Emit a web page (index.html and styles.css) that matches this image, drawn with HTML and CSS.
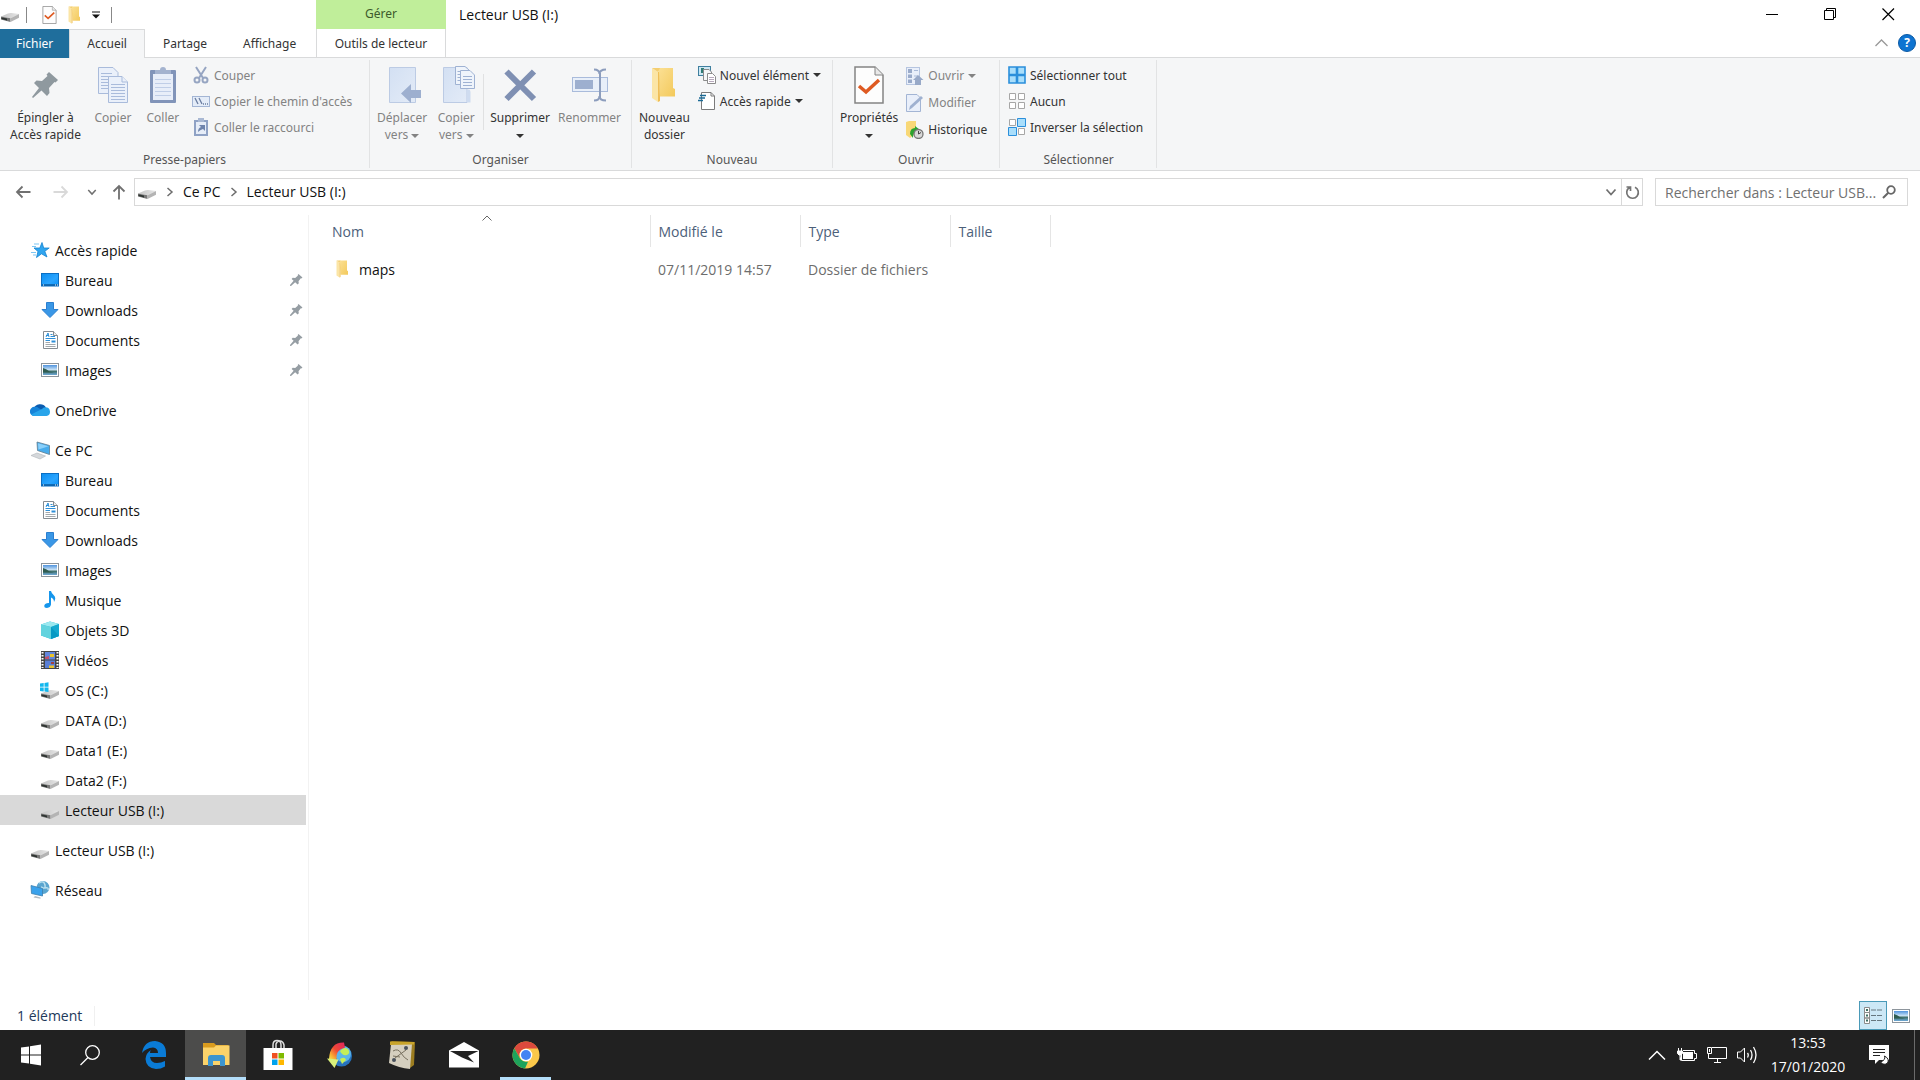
FILE: index.html
```html
<!DOCTYPE html>
<html lang="fr">
<head>
  <meta charset="UTF-8">
  <title>Lecteur USB (I:)</title>
  <link rel="stylesheet" href="styles.css">
</head>
<body>

<!-- shared icons -->
<svg class="defs" aria-hidden="true">
  <defs>
    <linearGradient id="gBlue" x1="0" y1="0" x2="1" y2="1"><stop offset="0" stop-color="#0a8df0"/><stop offset=".6" stop-color="#2ba5ff"/><stop offset="1" stop-color="#0a90f5"/></linearGradient>
    <linearGradient id="gSky" x1="0" y1="0" x2="0" y2="1"><stop offset="0" stop-color="#4f93dd"/><stop offset=".5" stop-color="#cfe6f7"/><stop offset=".6" stop-color="#3c6b62"/><stop offset="1" stop-color="#6fa9d8"/></linearGradient>
    <linearGradient id="gFolder" x1="0" y1="0" x2="1" y2="1"><stop offset="0" stop-color="#fbe094"/><stop offset="1" stop-color="#f3c95b"/></linearGradient>
    <linearGradient id="gPale" x1="0" y1="0" x2="1" y2="1"><stop offset="0" stop-color="#d3e0f3"/><stop offset="1" stop-color="#e3ebf7"/></linearGradient>
    <linearGradient id="gDrive" x1="0" y1="0" x2="1" y2="0"><stop offset="0" stop-color="#c4c4c4"/><stop offset="1" stop-color="#e6e6e6"/></linearGradient>
    <linearGradient id="gArc" x1="1" y1="0" x2="0" y2="1"><stop offset="0" stop-color="#e0245e"/><stop offset=".5" stop-color="#ee4a35"/><stop offset=".8" stop-color="#f9b233"/><stop offset="1" stop-color="#e8ee5a"/></linearGradient>
  </defs>
  <symbol id="drive" viewBox="0 0 20 20">
    <path d="M1 13.500L8 10.500Q9.500 9.800 11.500 10L19 11L10.500 15.300Z" fill="url(#gDrive)"/>
    <path d="M1 13.500L10.500 15.300V19L1 16.500Z" fill="#777"/>
    <path d="M1.500 14.400L7 15.600V17.600L1.500 16Z" fill="#2e3431"/>
    <path d="M10.500 15.300L19 11V14.800L10.500 19Z" fill="#b4b4b4"/>
  </symbol>
  <symbol id="osdrive" viewBox="0 0 20 20">
    <use href="#drive"/>
    <path d="M0 3.500L3.700 3V6.800H0ZM4.500 2.900L8.500 2.300V6.800H4.500ZM0 7.600H3.700V11.400L0 10.900ZM4.500 7.600H8.500V12L4.500 11.500Z" fill="#12b7ee"/>
  </symbol>
  <symbol id="star" viewBox="0 0 20 20">
    <path d="M12 2.500L13.700 8H19.200L14.800 11.300L17 17L11.500 13.800L6.500 17.500L8 11.500L4 8H9.800Z" fill="#2fa5ef" stroke="#1583d0" stroke-width=".8"/>
    <path d="M4 4H9M2 6.500H6M1 12.500H6M3 15H6" stroke="#7cc6f3"/>
  </symbol>
  <symbol id="desktop" viewBox="0 0 20 20">
    <rect x="1.500" y="3.500" width="17" height="12.500" fill="url(#gBlue)" stroke="#0b6fc4"/>
    <path d="M2 15H18" stroke="#0b5b9f" stroke-width="1.500"/>
    <path d="M3 15H4M15 15H16M17 15H18" stroke="#fff"/>
  </symbol>
  <symbol id="down" viewBox="0 0 20 20">
    <path d="M6.500 2.500H13.500V9.500H18L10 17.500L2 9.500H6.500Z" fill="#3a97e6" stroke="#2b7fd0"/>
  </symbol>
  <symbol id="doc" viewBox="0 0 20 20">
    <path d="M3.500 1.500H13.500L17.500 5.500V18.500H3.500Z" fill="#fff" stroke="#858c92"/>
    <path d="M13.500 1.500V5.500H17.500" fill="#eee" stroke="#858c92"/>
    <path d="M6 7L8 3L9 7M6 5.500H9M10.500 4.500H12.500M10.500 6.500H15M5.500 8.500H15.500M5.500 10.500H10" stroke="#2c8fd8" fill="none"/>
    <path d="M11.500 10.500H15.500V12.500H11.500Z" fill="#2c8fd8"/>
    <path d="M5.500 12.500H10M5.500 14.500H15.500M5.500 16.500H15.500" stroke="#a3a9ad"/>
  </symbol>
  <symbol id="image" viewBox="0 0 20 20">
    <rect x="1.500" y="3.500" width="17" height="13" fill="#fff" stroke="#8d959c"/>
    <rect x="3" y="5" width="14" height="10" fill="url(#gSky)"/>
    <path d="M3 8Q7 9 9.500 11.500L14 12.500H3Z" fill="#2f5c50"/>
  </symbol>
  <symbol id="cloud" viewBox="0 0 20 20">
    <path d="M3.500 9A7 7 0 0 1 16 7.500L10 13Z" fill="#0a5cb0"/>
    <path d="M4.500 16A4.600 4.600 0 0 1 4.500 6.800Q7 6.500 9 8.200L14 11L8 16Z" fill="#1683d8"/>
    <path d="M4.500 16Q2.500 16 1 14.500L12 9Q13.500 7 15.500 7.300A4.400 4.400 0 0 1 16.500 16Z" fill="#28a4ea"/>
  </symbol>
  <symbol id="pc" viewBox="0 0 20 20">
    <path d="M7 2L19.500 5.500V14.500L7.500 10.500Z" fill="#48acec" stroke="#5e7c90" stroke-width=".8"/>
    <path d="M8 3.300L18.500 6.200L8.500 9.500Z" fill="#8bd0fa"/>
    <path d="M1 15.500L7 13L15.500 16L10 19Z" fill="#d5d8db" stroke="#b0b5ba" stroke-width=".6"/>
  </symbol>
  <symbol id="music" viewBox="0 0 20 20">
    <path d="M9 1H11Q11.500 3.500 14 5.500Q16.500 8 14 12Q14 8.500 11 7.500V14.500Q10.500 17.500 7 18Q4 18 4.300 15.500Q5 12.800 9 13Z" fill="#1696ec"/>
  </symbol>
  <symbol id="cube" viewBox="0 0 20 20">
    <path d="M1 4.500L10 1.500L19 4V16L11 19L1 15.500Z" fill="#27bdd8"/>
    <path d="M1 4.500L10 1.500L19 4L11 7Z" fill="#9be8ef"/>
    <path d="M1 4.500L11 7V19L1 15.500Z" fill="#62d3de"/>
    <path d="M11 7L19 4V16L11 19Z" fill="#14a9cf"/>
    <path d="M11 7L19 16L11 19Z" fill="#089ac4"/>
  </symbol>
  <symbol id="video" viewBox="0 0 20 20">
    <rect x="1" y="1" width="18" height="18" fill="#444"/>
    <path d="M2.500 2V18M17.500 2V18" stroke="#fff" stroke-width="2" stroke-dasharray="1.500 1.500"/>
    <rect x="5" y="2" width="10" height="7.500" fill="#6286dc"/>
    <rect x="5" y="10.500" width="10" height="7.500" fill="#5a7fd6"/>
    <path d="M10 4H14V7H10Z" fill="#e8c22c"/><path d="M5 7L9 6V9H5Z" fill="#c0506d"/>
    <path d="M11 12H14V14H11Z" fill="#a04040"/><path d="M9 15.500H14V18H9Z" fill="#e8c22c"/>
  </symbol>
  <symbol id="network" viewBox="0 0 20 20">
    <circle cx="13" cy="7.500" r="6.500" fill="#5aa5cf"/>
    <path d="M9 3Q14 0 15 5T11 7M15 8Q19 7 18 10" stroke="#b9dfee" fill="none" stroke-width="1.500"/>
    <path d="M1 5.500L12.500 8.500V16L1.500 13.500Z" fill="#3aa2ec" stroke="#3b7fae" stroke-width=".8"/>
    <path d="M5 16L10.500 17.500V18.800L3.500 17.500Z" fill="#b4bcc2"/>
  </symbol>
  <symbol id="pin" viewBox="0 0 14 14">
    <path d="M9.500 1L13.500 4.500L12.300 5.500L11.800 5.200L9.500 8.200L9.800 10.300L8.600 11.500L6.200 9.200L2 13L1 12.800L1 12L4.600 7.800L2.600 6L3.700 4.800L6.200 5L9 2.600L8.700 1.900Z" fill="#959da3"/>
  </symbol>
  <symbol id="folder" viewBox="0 0 24 36">
    <path d="M6 1H21V21L23 22V29.500H8Z" fill="url(#gFolder)"/>
    <path d="M0 1L6 5V35L0 31Z" fill="#fbe5a6"/><path d="M6 5V35L8 34V30L7 5Z" fill="#f0bf57"/>
    <path d="M0 1H8L6 5Z" fill="#f4ce70"/>
  </symbol>
  <symbol id="chev" viewBox="0 0 12 12"><path d="M1.500 3.500L6 8.500L10.500 3.500" fill="none" stroke="currentColor" stroke-width="1.800"/></symbol>
  <symbol id="crumb" viewBox="0 0 12 12"><path d="M3.500 2L8 6L3.500 10" fill="none" stroke="currentColor" stroke-width="1.500"/></symbol>
  <symbol id="check" viewBox="0 0 30 38">
    <path d="M1 1H21L29 9V37H1Z" fill="#fdfdfd" stroke="#848484" stroke-width="1.500"/>
    <path d="M21 1V9H29" fill="#e9e9e9" stroke="#848484"/>
    <path d="M5 20L12 26L25 14" fill="none" stroke="#de5a22" stroke-width="3.500"/>
  </symbol>
</svg>

<header class="window-head">
  <div class="quick-access">
    <svg class="ico20 drive-ico"><use href="#drive"/></svg>
    <span class="bar"></span>
    <button aria-label="Propriétés"><svg width="15" height="18"><use href="#check"/></svg></button>
    <button aria-label="Nouveau dossier"><svg width="13" height="18"><use href="#folder"/></svg></button>
    <button aria-label="Personnaliser"><svg width="8" height="8" viewBox="0 0 8 8"><path d="M0 1H8" stroke="#111" stroke-width="1"/><path d="M0 3.500H8L4 7.500Z" fill="#111"/></svg></button>
    <span class="bar"></span>
  </div>
  <div class="context-tag">Gérer</div>
  <div class="window-title">Lecteur USB (I:)</div>
  <div class="window-controls">
    <button aria-label="Réduire"><svg width="13" height="13"><path d="M0 6.500H12" stroke="#000"/></svg></button>
    <button aria-label="Restaurer"><svg width="13" height="13"><path d="M.5 2.500H9.500V11.500H.5ZM2.500 2.500V.5H11.500V9.500H9.500" fill="none" stroke="#000"/></svg></button>
    <button aria-label="Fermer"><svg width="13" height="13"><path d="M.5 .5L12 12M12 .5L.5 12" stroke="#000" stroke-width="1.200"/></svg></button>
  </div>

  <nav class="tabs">
    <button class="tab tab-file">Fichier</button>
    <button class="tab tab-active">Accueil</button>
    <button class="tab">Partage</button>
    <button class="tab">Affichage</button>
  </nav>
  <button class="tab tab-context">Outils de lecteur</button>
  <div class="tab-fill"></div>
  <div class="ribbon-help">
    <button aria-label="Réduire le ruban"><svg width="13" height="8"><path d="M.5 7L6.500 1L12.500 7" fill="none" stroke="#999" stroke-width="1.300"/></svg></button>
    <button class="help" aria-label="Aide">?</button>
  </div>
</header>

<section class="ribbon">
  <div class="group group-clipboard">
    <div class="group-body">
      <button class="big pin-big">
        <svg width="38" height="38" viewBox="0 0 38 38"><path d="M23 6L32 14L29.500 16.500L28.500 16L23 22L23.500 27L21 30L15.500 24.500L7 32L6 31L13 22L8 17L10.500 14.500L16 15L21.500 10L20.500 8.500Z" fill="#8f999f"/></svg>
        <span>Épingler à<br>Accès rapide</span>
      </button>
      <button class="big" disabled>
        <svg width="38" height="38" viewBox="0 0 38 38" fill="#eaf0fa" stroke="#a9bbdb"><path d="M4.500 1.500H19L24 6.500V27.500H4.500Z"/><path d="M7 7.500H18M7 10.500H20M7 13.500H20M7 16.500H20M7 19.500H20M7 22.500H20"/><path d="M14.500 10.500H28L33.500 16V36.500H14.500Z"/><path d="M28 10.500V16H33.500M17 18.500H31M17 21.500H31M17 24.500H31M17 27.500H31M17 30.500H31M17 33.500H31"/></svg>
        <span>Copier</span>
      </button>
      <button class="big" disabled>
        <svg width="38" height="38" viewBox="0 0 38 38"><rect x="6" y="4" width="26" height="33" rx="1" fill="#8194b9"/><rect x="9" y="8" width="20" height="26" fill="#e8eef9"/><path d="M11 13.500H27M11 17.500H27M11 21.500H27M11 25.500H27M11 29.500H27" stroke="#c0cee7"/><path d="M11 4H16A3 3 0 0 1 22 4H27V8H11Z" fill="#a4b3cf"/></svg>
        <span>Coller</span>
      </button>
      <div class="small-list">
        <button disabled><svg class="ico18" viewBox="0 0 18 18" fill="none" stroke="#96a5c2" stroke-width="2"><path d="M4 1L11 12M14 1L7 12"/><circle cx="5" cy="14" r="2.500"/><circle cx="13" cy="14" r="2.500"/></svg>Couper</button>
        <button disabled><svg class="ico18" viewBox="0 0 18 18"><rect x=".5" y="4.500" width="17" height="10" fill="#e4ecf8" stroke="#a3b5d4"/><path d="M3 6L6 12M7 6L10 12M11 12H12M13 12H14M15 12H16" stroke="#6a7da0" stroke-width="1.300"/></svg>Copier le chemin d'accès</button>
        <button disabled><svg class="ico18" viewBox="0 0 18 18"><rect x="2" y="2" width="14" height="16" fill="#8fa2c5"/><rect x="4" y="4" width="10" height="12" fill="#e6edf8"/><path d="M6 0H12V4H6Z" fill="#a9b8d3"/><path d="M6 14Q6 10 9 9L7 7H13V13L11 11Q8 12 6 14Z" fill="#6f84ac"/></svg>Coller le raccourci</button>
      </div>
    </div>
    <div class="group-name">Presse-papiers</div>
  </div>

  <div class="group group-organise">
    <div class="group-body">
      <button class="big" disabled>
        <svg width="38" height="38" viewBox="0 0 38 38"><path d="M6.500 1.500H32.500V36.500H6.500Z" fill="url(#gPale)" stroke="#bccbe4"/><path d="M18 27.500L28 18V24H38V32H28V37Z" fill="#9dafcf"/></svg>
        <span>Déplacer<br>vers <i class="caret"></i></span>
      </button>
      <button class="big" disabled>
        <svg width="38" height="38" viewBox="0 0 38 38"><path d="M6.500 1.500H30V36.500H6.500Z" fill="url(#gPale)" stroke="#bccbe4"/><path d="M30 24Q34 22 33.500 28V36.500H30Z" fill="#cfdcf0"/><g fill="#eff4fb" stroke="#9fb2d3"><path d="M18.500 .5H28L32 4V18.500H18.500Z"/><path d="M23.500 4.500H33L37.500 9V22.500H23.500Z"/><path d="M26 10.500H35M26 13.500H35M26 16.500H35M26 19.500H35M20.500 5.500H23M20.500 8.500H23M20.500 11.500H23M20.500 14.500H23"/></g></svg>
        <span>Copier<br>vers <i class="caret"></i></span>
      </button>
      <span class="divider"></span>
      <button class="big">
        <svg width="38" height="38" viewBox="0 0 38 38"><path d="M5.500 5.500L33 33M33 5.500L5.500 33" stroke="#7f90b3" stroke-width="6"/></svg>
        <span>Supprimer<br><i class="caret"></i></span>
      </button>
      <button class="big" disabled>
        <svg width="38" height="38" viewBox="0 0 38 38"><rect x="1.500" y="11.500" width="35" height="14" fill="#e8eff9" stroke="#a9bbdb"/><rect x="4" y="14" width="18" height="9" fill="#9dafcf"/><path d="M23 3.500Q28.500 3.500 28.500 8Q28.500 3.500 35 3.500M29 7V32M23 34.500Q28.500 34.500 28.500 30Q28.500 34.500 35 34.500" fill="none" stroke="#8c9dbd" stroke-width="2"/></svg>
        <span>Renommer</span>
      </button>
    </div>
    <div class="group-name">Organiser</div>
  </div>

  <div class="group group-new">
    <div class="group-body">
      <button class="big">
        <svg width="24" height="38"><use href="#folder"/></svg>
        <span>Nouveau<br>dossier</span>
      </button>
      <div class="small-list">
        <button><svg class="ico18" viewBox="0 0 18 18"><rect x=".5" y=".5" width="12" height="9" fill="#cfe8f4" stroke="#3f7f9f"/><rect x="3" y="2" width="3" height="5" fill="#317c75"/><path d="M5.500 3.500H11L13.500 6V14.500H5.500Z" fill="#f7f7f9" stroke="#8c8c8c"/><path d="M9.500 7.500H14.500L17.500 10.500V17.500H9.500Z" fill="#fff" stroke="#8c8c8c"/><path d="M11 11.500H16M11 13.500H16M11 15.500H16" stroke="#b7a9bd"/></svg>Nouvel élément <i class="caret"></i></button>
        <button><svg class="ico18" viewBox="0 0 18 18"><path d="M3.500 .5H13L16.500 4V17.500H3.500Z" fill="#fff" stroke="#7b7b7b"/><path d="M13 .5V4H16.500" fill="none" stroke="#7b7b7b"/><path d="M2 3.500H8M1 6H7M0 8.500H5" stroke="#1b6b96" stroke-width="1.300"/></svg>Accès rapide <i class="caret"></i></button>
      </div>
    </div>
    <div class="group-name">Nouveau</div>
  </div>

  <div class="group group-open">
    <div class="group-body">
      <button class="big">
        <svg width="30" height="38"><use href="#check"/></svg>
        <span>Propriétés<br><i class="caret"></i></span>
      </button>
      <div class="small-list roomy">
        <button disabled><svg class="ico18" viewBox="0 0 18 18"><rect x=".5" y=".5" width="13" height="17" fill="#e9effa" stroke="#b6c5e0"/><path d="M2 2H6V6H2ZM2 7.500H6V11H2ZM2 12.500H6V16H2Z" fill="#9aabca"/><path d="M8 3.500H12M8 9H12" stroke="#a9bad8"/><path d="M12 8L17.500 13H15V18H9V13H7Z" fill="#98a9c8"/></svg>Ouvrir <i class="caret"></i></button>
        <button disabled><svg class="ico18" viewBox="0 0 18 18"><path d="M.5 .5H11L14.500 4V17.500H.5Z" fill="#e9effa" stroke="#a3b5d4"/><path d="M15 2L17 4L6 14L3 16L4 12Z" fill="#9fb1d0"/></svg>Modifier</button>
        <button><svg class="ico18" viewBox="0 0 18 18"><path d="M0 1L3 0H10V12L4 17L0 14Z" fill="#f8d877"/><path d="M4 13Q4 7 9 7V5L14 9L9 12Q7 12 7 17Z" fill="#2ba32f"/><circle cx="12.500" cy="13" r="4.500" fill="#d8d8d8" stroke="#777" stroke-width="1.300"/><path d="M12.500 10V13L15 11.500" stroke="#444" fill="none"/></svg>Historique</button>
      </div>
    </div>
    <div class="group-name">Ouvrir</div>
  </div>

  <div class="group group-select">
    <div class="group-body">
      <div class="small-list">
        <button><svg class="ico18" viewBox="0 0 18 18" fill="#a9defb" stroke="#2b8fdb" stroke-width="1.600"><path d="M1 1H8.500V8.500H1ZM9.500 1H17V8.500H9.500ZM1 9.500H8.500V17H1ZM9.500 9.500H17V17H9.500Z"/></svg>Sélectionner tout</button>
        <button><svg class="ico18" viewBox="0 0 18 18" fill="#fff" stroke="#a6a6a6"><path d="M1.500 1.500H7.500V7.500H1.500ZM10.500 1.500H16.500V7.500H10.500ZM1.500 10.500H7.500V16.500H1.500ZM10.500 10.500H16.500V16.500H10.500Z"/></svg>Aucun</button>
        <button><svg class="ico18" viewBox="0 0 18 18"><path d="M1.500 1.500H7.500V7.500H1.500ZM10.500 10.500H16.500V16.500H10.500Z" fill="#fff" stroke="#a6a6a6"/><path d="M9.500 .5H17.500V8.500H9.500ZM.5 9.500H8.500V17.500H.5Z" fill="#a9defb" stroke="#2b8fdb"/></svg>Inverser la sélection</button>
      </div>
    </div>
    <div class="group-name">Sélectionner</div>
  </div>
</section>

<div class="address-row">
  <button class="nav-btn" aria-label="Précédent"><svg width="16" height="14"><path d="M15.500 7H2M7.500 1.500L2 7L7.500 12.500" fill="none" stroke="#707070" stroke-width="1.800"/></svg></button>
  <button class="nav-btn" aria-label="Suivant" disabled><svg width="16" height="14"><path d="M.5 7H14M8.500 1.500L14 7L8.500 12.500" fill="none" stroke="#d9d9d9" stroke-width="1.800"/></svg></button>
  <button class="nav-btn nav-recent" aria-label="Emplacements récents"><svg width="10" height="10"><use href="#chev"/></svg></button>
  <button class="nav-btn nav-up" aria-label="Dossier parent"><svg width="14" height="16"><path d="M7 15.500V2M1.500 7.500L7 2L12.500 7.500" fill="none" stroke="#707070" stroke-width="1.800"/></svg></button>
  <div class="address">
    <svg class="ico20 drive-ico"><use href="#drive"/></svg>
    <svg class="crumb"><use href="#crumb"/></svg>
    <a href="#">Ce PC</a>
    <svg class="crumb"><use href="#crumb"/></svg>
    <a href="#">Lecteur USB (I:)</a>
    <button class="address-drop" aria-label="Emplacements précédents"><svg width="12" height="12"><use href="#chev"/></svg></button>
    <button class="refresh" aria-label="Actualiser"><svg width="15" height="15"><path d="M4.500 2.500A5.800 5.800 0 1 0 10 2.200M1.500 2H5.500V6" fill="none" stroke="#747474" stroke-width="1.700"/></svg></button>
  </div>
  <div class="search">
    <input type="text" aria-label="Rechercher" placeholder="Rechercher dans : Lecteur USB...">
    <svg width="14" height="14"><circle cx="9" cy="5" r="3.800" fill="none" stroke="#666" stroke-width="1.800"/><path d="M6.300 7.700L1 13" stroke="#666" stroke-width="2"/></svg>
  </div>
</div>

<main class="content">
  <nav class="sidebar">
    <ul>
      <li><a href="#" class="root"><svg class="ico20"><use href="#star"/></svg>Accès rapide</a></li>
      <li><a href="#"><svg class="ico20"><use href="#desktop"/></svg>Bureau<svg class="pin"><use href="#pin"/></svg></a></li>
      <li><a href="#"><svg class="ico20"><use href="#down"/></svg>Downloads<svg class="pin"><use href="#pin"/></svg></a></li>
      <li><a href="#"><svg class="ico20"><use href="#doc"/></svg>Documents<svg class="pin"><use href="#pin"/></svg></a></li>
      <li><a href="#"><svg class="ico20"><use href="#image"/></svg>Images<svg class="pin"><use href="#pin"/></svg></a></li>
    </ul>
    <ul>
      <li><a href="#" class="root"><svg class="ico20"><use href="#cloud"/></svg>OneDrive</a></li>
    </ul>
    <ul>
      <li><a href="#" class="root"><svg class="ico20"><use href="#pc"/></svg>Ce PC</a></li>
      <li><a href="#"><svg class="ico20"><use href="#desktop"/></svg>Bureau</a></li>
      <li><a href="#"><svg class="ico20"><use href="#doc"/></svg>Documents</a></li>
      <li><a href="#"><svg class="ico20"><use href="#down"/></svg>Downloads</a></li>
      <li><a href="#"><svg class="ico20"><use href="#image"/></svg>Images</a></li>
      <li><a href="#"><svg class="ico20"><use href="#music"/></svg>Musique</a></li>
      <li><a href="#"><svg class="ico20"><use href="#cube"/></svg>Objets 3D</a></li>
      <li><a href="#"><svg class="ico20"><use href="#video"/></svg>Vidéos</a></li>
      <li><a href="#"><svg class="ico20"><use href="#osdrive"/></svg>OS (C:)</a></li>
      <li><a href="#"><svg class="ico20"><use href="#drive"/></svg>DATA (D:)</a></li>
      <li><a href="#"><svg class="ico20"><use href="#drive"/></svg>Data1 (E:)</a></li>
      <li><a href="#"><svg class="ico20"><use href="#drive"/></svg>Data2 (F:)</a></li>
      <li><a href="#" class="selected"><svg class="ico20"><use href="#drive"/></svg>Lecteur USB (I:)</a></li>
    </ul>
    <ul>
      <li><a href="#" class="root"><svg class="ico20"><use href="#drive"/></svg>Lecteur USB (I:)</a></li>
    </ul>
    <ul>
      <li><a href="#" class="root"><svg class="ico20"><use href="#network"/></svg>Réseau</a></li>
    </ul>
  </nav>

  <div class="files">
    <table>
      <thead>
        <tr>
          <th class="col-name">Nom<svg class="sort" width="10" height="6"><path d="M.5 5.500L5 1L9.500 5.500" fill="none" stroke="#666"/></svg></th>
          <th class="col-wide">Modifié le</th>
          <th class="col-wide">Type</th>
          <th class="col-size">Taille</th>
        </tr>
      </thead>
      <tbody>
        <tr>
          <td class="col-name"><span class="file"><svg width="13" height="18"><use href="#folder"/></svg>maps</span></td>
          <td>07/11/2019 14:57</td>
          <td>Dossier de fichiers</td>
          <td></td>
        </tr>
      </tbody>
    </table>
  </div>
</main>

<footer class="status">
  <span class="count">1 élément</span>
  <button class="view active" aria-label="Détails"><svg width="18" height="18"><path d="M.5 .5H5.500V5.500H.5ZM.5 5.500H5.500V11H.5ZM.5 11H5.500V16.500H.5Z" fill="#fff" stroke="#8b8b8b"/><path d="M2 3H4M2 8.500H4M2 13.500H4" stroke="#3c6f63" stroke-width="2"/><path d="M7 3H12M13 3H18M7 8.500H12M13 8.500H18M7 13.500H12M13 13.500H18" stroke="#66777f"/></svg></button>
  <button class="view" aria-label="Grandes icônes"><svg class="ico20"><use href="#image"/></svg></button>
</footer>

<div class="taskbar">
  <button class="task" aria-label="Démarrer"><svg width="20" height="22" viewBox="0 0 20 22"><path d="M0 3.500L8 2.400V10.500H0ZM9 2.200L20 .6V10.500H9ZM0 11.500H8V19.600L0 18.500ZM9 11.500H20V21.400L9 19.800Z" fill="#fff"/></svg></button>
  <button class="task search-task" aria-label="Rechercher"><svg width="22" height="22"><circle cx="13.500" cy="8.500" r="6.800" fill="none" stroke="#fff" stroke-width="1.300"/><path d="M9 13.500L1.500 21" stroke="#fff" stroke-width="1.300"/></svg></button>
  <button class="task" aria-label="Edge"><svg width="26" height="30" viewBox="0 0 26 30"><path d="M1 13Q3 1 14 1Q25 2 25 13V17H9Q10 23 16 23Q20 23 24 21V26.500Q20 29 15 29Q5 28 4.500 19Q5 13 10 10Q9 11 9 13H17Q17 8 12 7.500Q5 8 1 13Z" fill="#0a7bd6"/></svg></button>
  <button class="task current" aria-label="Explorateur"><svg width="28" height="26" viewBox="0 0 28 26"><path d="M1 1H12L14 3H26.500V9H1Z" fill="#d99b1e"/><path d="M1 5.500H12L14 3.500H27.500V23H1Z" fill="#fbd36a"/><path d="M6 24V16Q6 13 9 13H20Q23 13 23 16V24H18V19H11V24Z" fill="#3c95cf"/></svg></button>
  <button class="task" aria-label="Store"><svg width="30" height="32" viewBox="0 0 30 32"><path d="M10 9V6Q10 1.500 14 1.500T18 6V9M13 9V5Q14 2 17 2T21 6V9" fill="none" stroke="#ddd" stroke-width="1.500"/><path d="M.5 9H29.500V31H.5Z" fill="#fff"/><path d="M9 14H14.500V19.500H9Z" fill="#f05022"/><path d="M15.500 14H21V19.500H15.500Z" fill="#7fba00"/><path d="M9 20.500H14.500V26H9Z" fill="#00a3ee"/><path d="M15.500 20.500H21V26H15.500Z" fill="#ffb800"/></svg></button>
  <button class="task" aria-label="Synchronisation"><svg width="26" height="28" viewBox="0 0 26 28"><circle cx="14.500" cy="15" r="10.500" fill="#2672bd"/><circle cx="16" cy="13" r="8" fill="#5cb6ea"/><path d="M13 10Q17 5 21 8Q24 12 20 14Q15 15 13 10ZM13 18Q18 15 19 19L15 23Z" fill="#c5ee5a"/><path d="M17 1.500Q3 1 2 18L9.500 19Q8 9 18 6.500Z" fill="url(#gArc)"/><path d="M0 17.500L11.500 18.500L7.500 27Z" fill="#d9f07a"/></svg></button>
  <button class="task" aria-label="Cartes"><svg width="28" height="30" viewBox="0 0 28 30"><path d="M3 1L27 2L26 25L22 28Z" fill="#9c7d20"/><path d="M3 4L24 4L22 29Q11 28 1 23Z" fill="#d5cfbf"/><path d="M2 1.500L26 2V4.500L2 5Z" fill="#c8a42c"/><path d="M5 11Q10 8 13 13T20 20M7 18L18 10M5 16L12 17" fill="none" stroke="#77705f"/><circle cx="18" cy="8" r="2" fill="#48515d"/><circle cx="6" cy="20" r="2" fill="#48515d"/></svg></button>
  <button class="task" aria-label="Courrier"><svg width="30" height="26" viewBox="0 0 30 26"><path d="M0 8.500L15 0L30 8.500V25.500H0Z" fill="#fff"/><path d="M1 9H29.500L19 14L25 20.500L13 15.500Z" fill="#222"/></svg></button>
  <button class="task running" aria-label="Chrome"><svg width="28" height="30" viewBox="0 0 28 30"><circle cx="14" cy="15" r="13.500" fill="#fbc84a"/><path d="M2.300 8.200A13.500 13.500 0 0 1 25.800 8.500H14A7 7 0 0 0 8 18.500Z" fill="#db4a3d"/><path d="M2.300 8.200L8 18.500Q11 22 14 21.800H16L13 28.500A13.500 13.500 0 0 1 2.300 8.200Z" fill="#1ea35c"/><circle cx="14" cy="15" r="6.300" fill="#fff"/><circle cx="14" cy="15" r="5" fill="#4484f2"/></svg></button>

  <div class="tray">
    <button aria-label="Icônes cachées"><svg width="18" height="10"><path d="M1 9.500L9 1.500L17 9.500" fill="none" stroke="#fff" stroke-width="1.500"/></svg></button>
    <button aria-label="Batterie"><svg width="20" height="14"><path d="M4.500 5V12.500H17.500V10.500H19.500V5.500H17.500V2.500H6" fill="none" stroke="#fff"/><path d="M6 4H16V11H6Z" fill="#fff"/><path d="M1.500 0V3M4.500 0V3M.5 3H5.500V5.500L4 7H2L.5 5.500ZM3 7V12H4.500" fill="#fff" stroke="#fff"/></svg></button>
    <button aria-label="Réseau"><svg width="20" height="16"><path d="M5 .5H19.500V11.500H1.500V7M10.500 12V15M7 15.500H14" fill="none" stroke="#fff"/><path d="M.5 .5H4.500V6.500H.5ZM2.500 2V5" fill="none" stroke="#fff"/></svg></button>
    <button aria-label="Volume"><svg width="20" height="18"><path d="M.5 6H3.500L7.500 2V16L3.500 12H.5Z" fill="none" stroke="#fff"/><path d="M10.500 7Q12 9 10.500 11.500M13.500 4Q16.500 9 13.500 14M16.500 1Q21.500 9 16.500 17" fill="none" stroke="#fff" stroke-width="1.300"/></svg></button>
    <div class="clock">13:53<br>17/01/2020</div>
    <button class="notify" aria-label="Notifications"><svg width="20" height="20"><path d="M0 0H20V15H10L6 19V15H0Z" fill="#fff"/><path d="M4 4.500H16M4 7.500H16M4 10.500H11" stroke="#222"/><path d="M15.500 11Q17 15 11.500 17Q15 21 18.500 18Q21 14 15.500 11Z" fill="#fff" stroke="#222"/></svg></button>
  </div>
</div>

</body>
</html>
```
FILE: styles.css
```css
* {
  box-sizing: border-box;
}
body {
  margin: 0;
  height: 100vh;
  display: flex;
  flex-direction: column;
  font-family: "Open Sans", "Noto Sans", sans-serif;
  font-size: 14px;
  line-height: 20px;
  color: #111;
  background: #fff;
  overflow: hidden;
}
button {
  display: flex;
  align-items: center;
  justify-content: center;
  margin: 0;
  padding: 0;
  border: none;
  background: none;
  font: inherit;
  color: inherit;
}
a {
  color: inherit;
  text-decoration: none;
}
svg {
  flex: none;
}
.defs {
  position: absolute;
  width: 0;
  height: 0;
}
.ico20 {
  width: 20px;
  height: 20px;
}
.ico18 {
  width: 18px;
  height: 18px;
}
.drive-ico {
  margin-bottom: 4px;
}

/* title bar and tabs */
.window-head {
  display: grid;
  grid-template-columns: 316px 130px 1fr auto;
  grid-template-rows: 29px 29px;
}
.quick-access {
  display: flex;
  align-items: center;
}
.quick-access .bar {
  width: 1px;
  height: 16px;
  margin: 0 15px 0 6px;
  background: #888;
}
.quick-access button {
  margin-right: 11px;
}
.quick-access .bar:last-child {
  margin-left: 0;
}
.context-tag {
  display: flex;
  align-items: center;
  justify-content: center;
  padding-bottom: 2px;
  font-family: "Noto Sans", sans-serif;
  font-size: 12px;
  color: #3d5a2c;
  background: #c0ee9a;
}
.window-title {
  display: flex;
  align-items: center;
  padding-left: 13px;
}
.window-controls {
  display: flex;
  padding-right: 3px;
}
.window-controls button {
  width: 58px;
}
.tabs {
  display: flex;
  border-bottom: 1px solid #d9dadb;
}
.tab {
  padding: 2px 18px 0;
  font-family: "Noto Sans", sans-serif;
  font-size: 12px;
  color: #333;
}
.tab-file {
  padding: 0 16px;
  margin-bottom: -1px;
  color: #fff;
  background: #1f6e9c;
}
.tab-active {
  padding: 0 17px;
  margin-bottom: -1px;
  border: 1px solid #d9dadb;
  border-bottom: none;
  background: #f5f6f7;
}
.tab-context {
  padding: 2px 0 0;
  border-bottom: 1px solid #d9dadb;
  border-left: 1px solid #d9dadb;
  border-right: 1px solid #d9dadb;
}
.tab-fill,
.ribbon-help {
  border-bottom: 1px solid #d9dadb;
}
.ribbon-help {
  display: flex;
  align-items: center;
  justify-content: flex-end;
  gap: 10px;
  padding-right: 4px;
}
.help {
  width: 18px;
  height: 18px;
  border: 1px solid #0b5aa5;
  border-radius: 50%;
  background: #0f74d1;
  color: #fff;
  font-size: 12px;
  font-weight: bold;
}

/* ribbon */
.ribbon {
  display: flex;
  height: 113px;
  padding: 2px 0;
  border-bottom: 1px solid #d9dadb;
  background: #f5f6f7;
  font-family: "Noto Sans", sans-serif;
  font-size: 12px;
  line-height: 17px;
  color: #333;
}
.group {
  display: flex;
  flex-direction: column;
  padding: 0 3px;
  border-right: 1px solid #e2e3e4;
}
.group-clipboard {
  min-width: 370px;
}
.group-organise {
  min-width: 262px;
}
.group-new {
  min-width: 201px;
}
.group-open {
  min-width: 167px;
}
.group-select {
  min-width: 157px;
  padding-left: 4px;
}
.group-body {
  display: flex;
  flex: 1;
}
.group-name {
  text-align: center;
  color: #555;
}
.big {
  flex-direction: column;
  justify-content: flex-start;
  gap: 5px;
  min-width: 50px;
  padding: 6px 4px 0;
}
.pin-big {
  padding: 6px 7px 0;
}
.big svg {
  height: 38px;
}
.ribbon button:disabled {
  color: #838383;
}
.small-list {
  display: flex;
  flex-direction: column;
  align-items: flex-start;
  padding: 2px 4px 0;
}
.small-list button {
  gap: 4px;
  height: 26px;
}
.roomy button {
  height: 27px;
}
.divider {
  width: 1px;
  height: 56px;
  margin: 14px 2px 0;
  background: #e0e1e2;
}
.caret {
  display: inline-block;
  border: 4px solid transparent;
  border-top-color: currentColor;
  border-bottom: none;
  vertical-align: middle;
}

/* address bar */
.address-row {
  display: flex;
  align-items: center;
  padding: 7px 12px 9px 4px;
}
.nav-btn {
  width: 38px;
  height: 28px;
  color: #707070;
}
.nav-recent {
  width: 23px;
}
.nav-up {
  width: 31px;
}
.address {
  display: flex;
  align-items: center;
  flex: 1;
  height: 28px;
  padding-left: 2px;
  border: 1px solid #d9d9d9;
}
.crumb {
  width: 12px;
  height: 12px;
  margin: 0 7px;
  color: #6d6d6d;
}
.address-drop {
  width: 20px;
  margin-left: auto;
  color: #707070;
}
.refresh {
  width: 21px;
  align-self: stretch;
  border-left: 1px solid #d9d9d9;
}
.search {
  display: flex;
  align-items: center;
  width: 253px;
  height: 28px;
  margin-left: 12px;
  padding: 0 11px 0 9px;
  border: 1px solid #d9d9d9;
}
.search input {
  flex: 1;
  min-width: 0;
  padding: 1px 0 0;
  border: none;
  outline: none;
  background: none;
  font: inherit;
}
.search input::placeholder {
  color: #707070;
  opacity: 1;
}

/* folders and files */
.content {
  display: flex;
  flex: 1;
  min-height: 0;
}
.sidebar {
  width: 309px;
  padding: 20px 2px 0 0;
  border-right: 1px solid #f2f2f2;
}
.sidebar ul {
  margin: 0 0 10px;
  padding: 0;
  list-style: none;
}
.sidebar a {
  display: flex;
  align-items: center;
  gap: 5px;
  height: 30px;
  padding: 2px 3px 0 40px;
}
.sidebar svg {
  margin-bottom: 2px;
}
.sidebar .root {
  padding-left: 30px;
}
.sidebar .selected {
  background: #d9d9d9;
}
.sidebar .pin {
  width: 14px;
  height: 14px;
  margin-left: auto;
}
.files {
  flex: 1;
}
table {
  border-collapse: collapse;
  table-layout: fixed;
  width: 741px;
}
th {
  position: relative;
  height: 32px;
  padding: 2px 8px 0;
  border-right: 1px solid #e5e5e5;
  font-weight: normal;
  text-align: left;
  color: #4c607a;
}
td {
  height: 44px;
  padding: 2px 8px 0;
  color: #6d6d6d;
}
.col-name {
  width: 341px;
  padding-left: 23px;
}
.col-wide {
  width: 150px;
}
.col-size {
  width: 100px;
}
.sort {
  position: absolute;
  top: 0;
  left: 173px;
}
.file {
  display: flex;
  align-items: center;
  gap: 10px;
  padding-left: 4px;
  color: #111;
}
.file svg {
  margin-bottom: 2px;
}

/* status bar */
.status {
  display: flex;
  height: 30px;
  padding-right: 5px;
  color: #22395b;
}
.count {
  margin: 6px auto 4px 0;
  padding: 0 12px 0 17px;
  border-right: 1px solid #f0f0f0;
}
.view {
  width: 28px;
  height: 29px;
  margin-top: 1px;
}
.view.active {
  border: 1px solid #4a9ab8;
  background: #cce8f6;
}

/* taskbar */
.taskbar {
  display: flex;
  gap: 1px;
  height: 50px;
  background: #212121;
  color: #fff;
}
.task {
  width: 61px;
  border-bottom: 3px solid transparent;
  border-top: 3px solid transparent;
}
.task.search-task {
  width: 60px;
  padding-right: 4px;
}
.task.current {
  background: #4c4c4b;
  border-top-color: #4c4c4b;
  border-bottom-color: #b3defa;
}
.task.running {
  width: 51px;
  margin-left: 5px;
  border-bottom-color: #b3defa;
}
.tray {
  display: flex;
  margin: 0 5px 0 auto;
  border-right: 1px solid #6b6b6b;
}
.tray button {
  width: 30px;
}
.clock {
  width: 92px;
  padding-top: 1px;
  font-size: 14px;
  line-height: 24px;
  text-align: center;
}
.tray .notify {
  width: 60px;
  padding-right: 10px;
}
```
